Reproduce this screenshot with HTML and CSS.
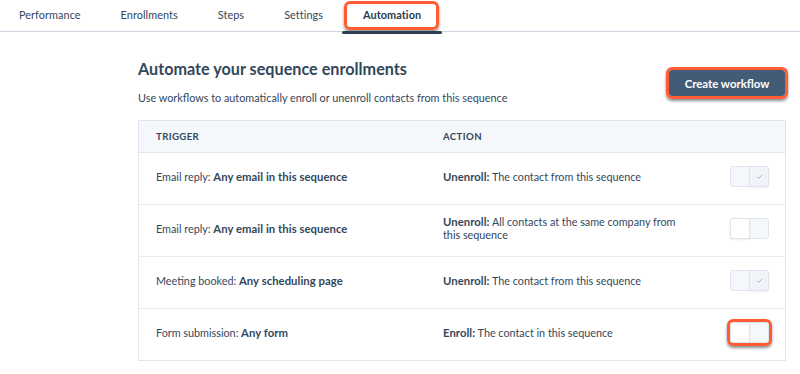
FILE: index.html
```html
<!DOCTYPE html>
<html>
<head>
<meta charset="utf-8">
<link rel="stylesheet" href="styles.css">
</head>
<body>
<nav class="tabs">
  <div class="tab">Performance</div>
  <div class="tab">Enrollments</div>
  <div class="tab">Steps</div>
  <div class="tab">Settings</div>
  <div class="tab active">Automation<span class="hl hl-tab"></span></div>
</nav>
<main class="content">
  <div class="top">
    <div class="intro">
      <h1>Automate your sequence enrollments</h1>
      <p>Use workflows to automatically enroll or unenroll contacts from this sequence</p>
    </div>
    <div class="btn-wrap">
      <button class="btn">Create workflow</button>
    </div>
  </div>
  <div class="table">
    <div class="row head">
      <div class="c1">TRIGGER</div>
      <div class="c2">ACTION</div>
      <div class="c3"></div>
    </div>
    <div class="row">
      <div class="c1">Email reply: <b>Any email in this sequence</b></div>
      <div class="c2"><b>Unenroll:</b> The contact from this sequence</div>
      <div class="c3"><span class="toggle on"><span class="half"></span><span class="half knob"><svg viewBox="0 0 10 10" width="9" height="9"><path d="M2 5.2 L4.2 7.2 L8 3" fill="none" stroke="#a9b6c6" stroke-width="1.1"/></svg></span></span></div>
    </div>
    <div class="row">
      <div class="c1">Email reply: <b>Any email in this sequence</b></div>
      <div class="c2"><b>Unenroll:</b> All contacts at the same company from this sequence</div>
      <div class="c3"><span class="toggle off"><span class="half knob"></span><span class="half"></span></span></div>
    </div>
    <div class="row">
      <div class="c1">Meeting booked: <b>Any scheduling page</b></div>
      <div class="c2"><b>Unenroll:</b> The contact from this sequence</div>
      <div class="c3"><span class="toggle on"><span class="half"></span><span class="half knob"><svg viewBox="0 0 10 10" width="9" height="9"><path d="M2 5.2 L4.2 7.2 L8 3" fill="none" stroke="#a9b6c6" stroke-width="1.1"/></svg></span></span></div>
    </div>
    <div class="row">
      <div class="c1">Form submission: <b>Any form</b></div>
      <div class="c2"><b>Enroll:</b> The contact in this sequence</div>
      <div class="c3"><span class="toggle off"><span class="half knob"></span><span class="half"></span><span class="hl hl-toggle"></span></span></div>
    </div>
  </div>
</main>
</body>
</html>
```
FILE: styles.css
```css
* { box-sizing: border-box; }
html, body { margin: 0; padding: 0; background: #fff; }
body {
  font-family: Lato, "Open Sans", sans-serif;
  color: #33475b;
  width: 800px;
  height: 374px;
  overflow: hidden;
}
.tabs {
  display: flex;
  height: 32px;
  border-bottom: 1px solid #cbd6e2;
}
.tab {
  position: relative;
  padding: 0 20px;
  font-size: 10.9px;
  line-height: 30px;
  color: #33475b;
  letter-spacing: 0.05px;
}
.tab:first-child { padding-left: 19px; }
.tab.active {
  font-weight: 700;
  color: #2d3e50;
}
.tab.active::after {
  content: "";
  position: absolute;
  left: -1px;
  right: -1px;
  bottom: -3px;
  height: 3px;
  border-radius: 2px;
  background: #2d3e50;
}
.hl {
  position: absolute;
  border: 3px solid #ff5c35;
  border-radius: 6px;
  box-shadow: 0 2px 3px rgba(0,0,0,0.45);
  pointer-events: none;
}
.hl-tab { left: 1px; right: 2px; top: 1px; height: 29px; }
.content {
  margin-left: 138px;
  width: 648px;
}
.top {
  display: flex;
  justify-content: space-between;
  align-items: flex-start;
  padding-top: 27px;
}
h1 {
  margin: 0;
  font-size: 16.2px;
  font-weight: 700;
  color: #33475b;
  line-height: 20px;
}
.intro p {
  margin: 12px 0 0;
  font-size: 10.85px;
  line-height: 14px;
  color: #33475b;
}
.btn-wrap {
  margin-top: 8px;
  margin-right: -2px;
  border: 3px solid #ff5c35;
  border-radius: 6px;
  box-shadow: 0 2px 3px rgba(0,0,0,0.45);
}
.btn {
  display: block;
  font-family: inherit;
  font-size: 11.4px;
  font-weight: 700;
  color: #fff;
  background: #425b76;
  border: none;
  border-radius: 3px;
  width: 116px;
  height: 26px;
  padding: 0;
}
.table {
  margin-top: 15px;
  border: 1px solid #e1e6ee;
}
.row {
  display: grid;
  grid-template-columns: 304px 278px 1fr;
  align-items: center;
  height: 52px;
  padding-bottom: 5px;
  border-top: 1px solid #e8ecf2;
  font-size: 10.8px;
  line-height: 13px;
}
.row:nth-child(2) { border-top: 1px solid #e1e6ee; }
.row b { font-size: 11.3px; letter-spacing: 0.05px; line-height: 13px; }
.row.head {
  height: 31px;
  padding-bottom: 0;
  border-top: none;
  background: #f5f8fa;
  font-size: 9.6px;
  font-weight: 700;
  letter-spacing: 0.4px;
  color: #33475b;
}
.c1 { padding-left: 17px; }
.c2 { padding-right: 36px; }
.c3 { display: flex; justify-content: flex-end; padding-right: 16px; }
b { font-weight: 700; }
.toggle {
  position: relative;
  display: flex;
  width: 39px;
  height: 21px;
  border: 1px solid #dfe5ee;
  border-radius: 3px;
  background: #f5f8fa;
}
.half {
  flex: 1;
  display: flex;
  align-items: center;
  justify-content: center;
}
.toggle.on .knob {
  background: #f1f4f8;
  border: 1px solid #dfe5ee;
  border-radius: 3px;
  margin: -1px -1px -1px 0;
  box-shadow: 0 1px 2px rgba(0,0,0,0.08);
}
.toggle.off .knob {
  background: #fff;
  border: 1px solid #dfe5ee;
  border-radius: 3px;
  margin: -1px 0 -1px -1px;
  box-shadow: 0 1px 2px rgba(0,0,0,0.08);
}
.hl-toggle { left: -4px; right: -4px; top: -4px; bottom: -4px; }
```
